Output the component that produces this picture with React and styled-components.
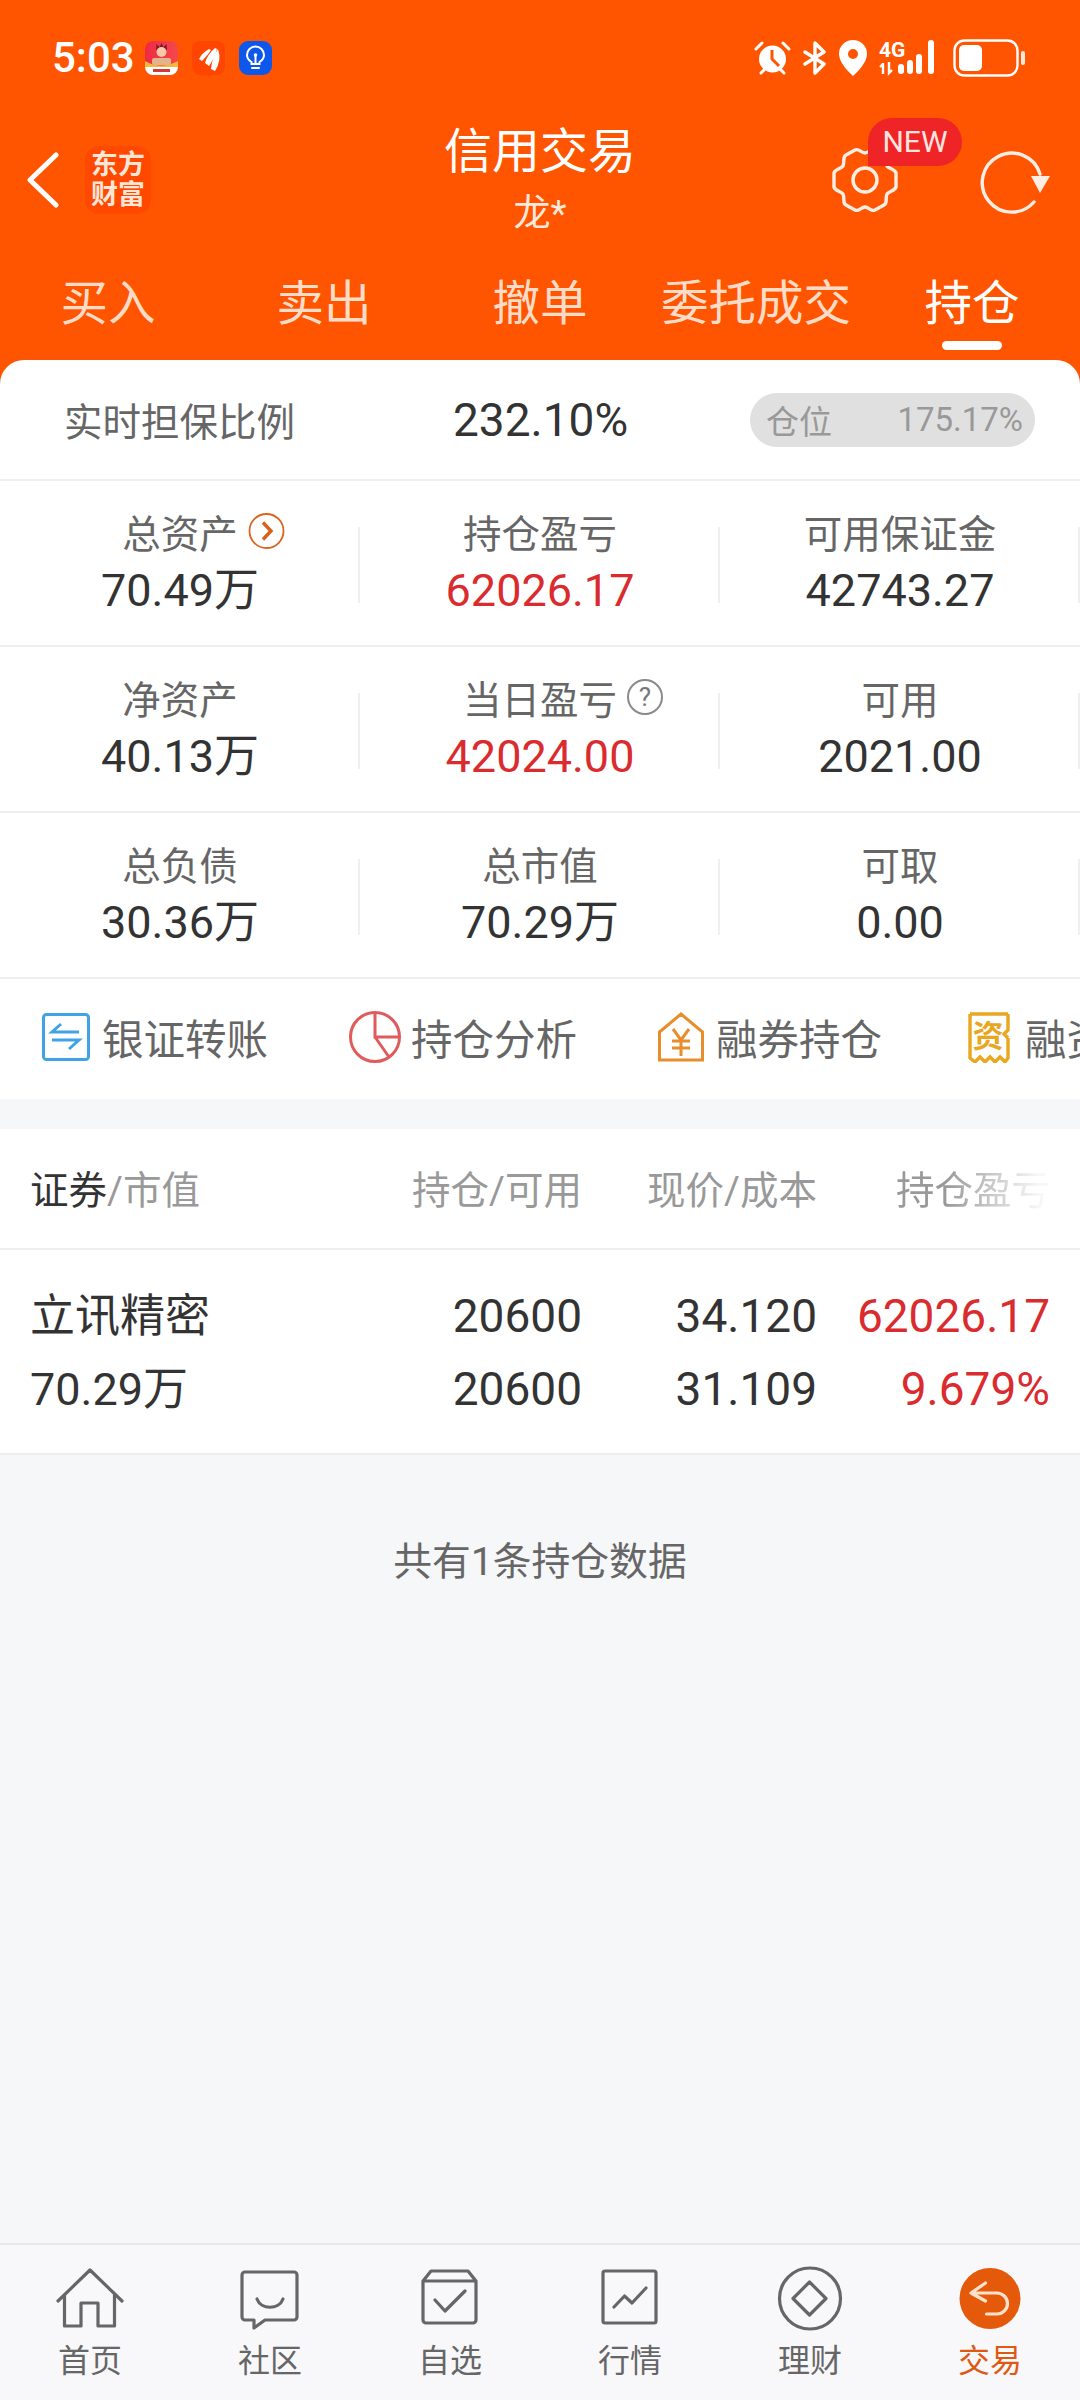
import styled, { createGlobalStyle } from 'styled-components';

const FONT = `Roboto, "Noto Sans CJK SC", "Noto Sans", sans-serif`;
const ORANGE = '#ff5500';
const RED = '#da2b2f';
const INK = '#333';

const GlobalStyle = createGlobalStyle`
  html, body {
    margin: 0;
    padding: 0;
    background: #f6f7f9;
  }
  * {
    box-sizing: border-box;
  }
`;

const Page = styled.div`
  width: 1080px;
  height: 2400px;
  display: flex;
  flex-direction: column;
  font-family: ${FONT};
  background: #f6f7f9;
  overflow: hidden;
`;

const Header = styled.header`
  height: 384px;
  margin-bottom: -24px;
  background: ${ORANGE};
  color: #fff;
  flex-shrink: 0;
`;

const StatusBar = styled.div`
  height: 115px;
  padding: 0 55px 0 52px;
  display: flex;
  align-items: center;
  justify-content: space-between;
`;

const StatusGroup = styled.div`
  display: flex;
  align-items: center;
  gap: ${props => props.$gap || 0}px;
`;

const Time = styled.span`
  width: 79px;
  font-size: 42px;
  font-weight: 500;
  line-height: 46px;
  white-space: nowrap;
`;

const NavRow = styled.div`
  height: 129px;
  display: grid;
  grid-template-columns: 1fr auto 1fr;
  align-items: center;
`;

const NavLeft = styled.div`
  display: flex;
  align-items: center;
  padding-left: 27px;
  gap: 26px;
`;

const BrandLogo = styled.div`
  width: 66px;
  height: 68px;
  border-radius: 14px;
  background: #ff4800;
  color: #ffe6d6;
  font-size: 27px;
  font-weight: 700;
  line-height: 30px;
  text-align: center;
  padding-top: 4px;
  white-space: nowrap;
`;

const NavTitle = styled.div`
  text-align: center;
  margin-top: -2px;
`;

const TitleText = styled.div`
  font-size: 48px;
  line-height: 62px;
  margin-bottom: 8px;
`;

const SubText = styled.div`
  font-size: 37px;
  line-height: 46px;
  color: #ffe9dc;
`;

const NavRight = styled.div`
  display: flex;
  justify-content: flex-end;
  align-items: center;
  padding-right: 29px;
  gap: 80px;
`;

const GearWrap = styled.div`
  position: relative;
  width: 68px;
  height: 68px;
`;

const NewBadge = styled.span`
  position: absolute;
  left: 37px;
  top: -28px;
  width: 94px;
  height: 48px;
  border-radius: 24px 24px 24px 0;
  background: #ee2426;
  color: #ffe4e0;
  font-size: 30px;
  line-height: 47px;
  text-align: center;
`;

const Tabs = styled.nav`
  height: 116px;
  display: grid;
  grid-template-columns: repeat(5, 216px);
  justify-items: center;
`;

const Tab = styled.div`
  position: relative;
  height: 90px;
  margin-top: 16px;
  font-size: 47.5px;
  line-height: 88px;
  color: ${props => (props.$active ? '#fff' : '#ffdcc8')};
  white-space: nowrap;
`;

const TabMark = styled.i`
  position: absolute;
  left: 50%;
  bottom: 0;
  width: 60px;
  height: 9px;
  margin-left: -30px;
  border-radius: 5px;
  background: #fff;
`;

const Card = styled.section`
  background: #fff;
  border-radius: 24px 24px 0 0;
  position: relative;
  flex-shrink: 0;
`;

const RatioRow = styled.div`
  height: 121px;
  padding: 0 44px 0 64px;
  display: flex;
  align-items: center;
  border-bottom: 2px solid #eeeeee;
`;

const RatioLabel = styled.span`
  width: 389px;
  font-size: 38.5px;
  color: #666;
  margin-top: -2px;
`;

const RatioValue = styled.span`
  width: 297px;
  font-size: 46px;
  color: ${INK};
`;

const Pill = styled.div`
  width: 285px;
  height: 54px;
  padding: 0 12px 0 16px;
  border-radius: 27px;
  background: #e0e0e0;
  display: flex;
  align-items: center;
  justify-content: space-between;
  font-size: 33px;
  color: #999;
`;

const MetricRow = styled.div`
  height: 166px;
  display: grid;
  grid-template-columns: repeat(3, 360px);
  align-items: center;
  border-bottom: 2px solid #eeeeee;
`;

const Metric = styled.div`
  position: relative;
  text-align: center;
  &::after {
    content: '';
    position: absolute;
    right: 0;
    top: 22px;
    height: 76px;
    border-right: 2px solid #efefef;
  }
`;

const MetricLabel = styled.div`
  height: 56px;
  padding-bottom: 4px;
  display: flex;
  justify-content: center;
  align-items: center;
  font-size: 38.5px;
  color: #666;
`;

const MetricName = styled.span`
  position: relative;
  white-space: nowrap;
`;

// hint marks hang off the label so the label itself stays centred in its column
const LabelExtra = styled.span`
  position: absolute;
  left: 100%;
  top: 50%;
  margin-left: 10px;
  transform: translateY(-50%);
  display: flex;
`;

const MetricValue = styled.div`
  height: 60px;
  font-size: 45px;
  line-height: 60px;
  color: ${props => (props.$up ? RED : INK)};
`;

const HelpMark = styled.span`
  width: 36px;
  height: 36px;
  border: 2px solid #8a8a8a;
  border-radius: 50%;
  font-size: 26px;
  line-height: 32px;
  text-align: center;
  color: #777;
`;

const Shortcuts = styled.div`
  height: 120px;
  padding: 0 0 4px 42px;
  display: flex;
  align-items: center;
  gap: 81px;
  overflow: hidden;
  background: #fff;
  flex-shrink: 0;
`;

const Shortcut = styled.div`
  display: flex;
  align-items: center;
  gap: ${props => props.$gap || 12}px;
  margin-left: ${props => props.$shift || 0}px;
  font-size: 41.5px;
  color: #666;
  white-space: nowrap;
  flex-shrink: 0;
`;

const Table = styled.section`
  margin-top: 30px;
  background: #fff;
  border-bottom: 2px solid #eeeeee;
  flex-shrink: 0;
`;

const TableRow = styled.div`
  display: grid;
  grid-template-columns: 316px 236px 235px 233px;
  padding: 0 30px;
  align-items: center;
`;

const TableHead = styled(TableRow)`
  height: 121px;
  padding-bottom: 4px;
  font-size: 38.5px;
  color: #999;
  border-bottom: 2px solid #eeeeee;
`;

const HeadCell = styled.div`
  text-align: right;
  white-space: nowrap;
`;

const HeadFirst = styled.div`
  color: #999;
  b {
    font-weight: 400;
    color: ${INK};
  }
`;

const HeadFade = styled(HeadCell)`
  -webkit-mask-image: linear-gradient(90deg, #000 55%, rgba(0, 0, 0, 0.08) 95%);
  mask-image: linear-gradient(90deg, #000 55%, rgba(0, 0, 0, 0.08) 95%);
`;

const BodyRow = styled(TableRow)`
  height: 203px;
  padding-top: 3px;
  grid-auto-rows: 73px;
  align-content: center;
`;

const Cell = styled.div`
  font-size: ${props => (props.$name ? 45 : 46)}px;
  line-height: 73px;
  text-align: ${props => (props.$name ? 'left' : 'right')};
  color: ${props => (props.$up ? RED : INK)};
  white-space: nowrap;
`;

const Summary = styled.div`
  flex: 1;
  padding-top: 82px;
  text-align: center;
  font-size: 38.8px;
  line-height: 50px;
  color: #666;
`;

const Footer = styled.footer`
  height: 157px;
  flex-shrink: 0;
  display: grid;
  grid-template-columns: repeat(6, 180px);
  padding-top: 18px;
  background: #f8f8fb;
  border-top: 2px solid #e8e8ea;
`;

const FootItem = styled.div`
  display: flex;
  flex-direction: column;
  align-items: center;
  font-size: 32px;
  line-height: 44px;
  color: ${props => (props.$active ? '#de5a12' : '#666')};
`;

const FootIcon = styled.svg.attrs({ viewBox: '0 0 72 72', width: 72, height: 72 })`
  display: block;
  margin-bottom: 4px;
  fill: none;
  stroke: #666;
  stroke-width: 3.2;
  stroke-linejoin: round;
  stroke-linecap: round;
`;

const AppIcon = () => (
  <svg width="33" height="34" viewBox="0 0 33 34">
    <defs>
      <linearGradient id="appBg" x1="0" y1="0" x2="1" y2="0">
        <stop offset="0" stopColor="#ee2a44" />
        <stop offset="1" stopColor="#f5484a" />
      </linearGradient>
    </defs>
    <rect width="33" height="34" rx="8" fill="url(#appBg)" />
    <path d="M0 20 Q16 29 33 20 V27 H0z" fill="#f5b83a" />
    <path d="M0 26 H33 A8 8 0 0 1 25 34 H8 A8 8 0 0 1 0 26z" fill="#fff" />
    <path d="M11 9 L11.5 3 L14.5 6 L16.5 2 L18.5 6 L21.5 3 L22 9z" fill="#7c1c2c" />
    <circle cx="16.5" cy="11" r="5" fill="#f8c8a8" />
    <rect x="7" y="17" width="19" height="7" rx="2" fill="#e3b48a" />
    <rect x="8" y="28" width="17" height="3" fill="#d03a3a" />
  </svg>
);

const ReadIcon = () => (
  <svg width="33" height="34" viewBox="0 0 33 34">
    <rect width="33" height="34" rx="8" fill="#ff4500" />
    <path d="M7 18 Q10 12 17 8 L19 9 Q16 14 10 20z" fill="#fff" />
    <path d="M13 22 Q15 14 23 7 L25 8 Q23 16 17 25z" fill="#fff" />
    <path d="M19 28 Q20 16 26 8 Q30 19 23 30z" fill="#fff" />
  </svg>
);

const TipsIcon = () => (
  <svg width="33" height="34" viewBox="0 0 33 34">
    <rect width="33" height="34" rx="9" fill="#0d58ea" />
    <path d="M12.5 23 V21 C10 19.5 8 17 8 14 A8.5 8.5 0 0 1 25 14 C25 17 23 19.5 20.5 21 V23z" fill="none" stroke="#fff" strokeWidth="2" />
    <path d="M13 27 H20 M16.5 23 V15" stroke="#fff" strokeWidth="2" strokeLinecap="round" />
    <circle cx="16.5" cy="14" r="1.8" fill="#fff" />
  </svg>
);

const AlarmIcon = () => (
  <svg width="37" height="36" viewBox="0 0 37 36">
    <circle cx="18.5" cy="19" r="13.5" fill="#fff" />
    <path d="M18 10 V19 L25 26" fill="none" stroke={ORANGE} strokeWidth="3" />
    <path d="M2 9 L8 3 M35 9 L29 3 M7 33 L10 30 M30 33 L27 30" stroke="#fff" strokeWidth="3" strokeLinecap="round" />
  </svg>
);

const BluetoothIcon = () => (
  <svg width="24" height="36" viewBox="0 0 24 36">
    <path d="M2 12 L21 24 L12 33 V3 L21 12 L2 24" fill="none" stroke="#fff" strokeWidth="3.4" strokeLinejoin="round" strokeLinecap="round" />
  </svg>
);

const PinIcon = () => (
  <svg width="28" height="36" viewBox="0 0 28 36">
    <path fillRule="evenodd" d="M14 0 A14 14 0 0 1 28 14 C28 23 18 32 14 36 C10 32 0 23 0 14 A14 14 0 0 1 14 0z M14 9 A5 5 0 1 0 14 19 A5 5 0 0 0 14 9z" fill="#fff" />
  </svg>
);

const SignalIcon = () => (
  <svg width="62" height="36" viewBox="0 0 62 36" overflow="visible">
    <text x="0" y="17" fontSize="21" fontWeight="700" fontFamily="Roboto, sans-serif" fill="#fff">4G</text>
    <path d="M4 24 L1 27 M4 23 V34 M10 22 V33 L13 30" fill="none" stroke="#fff" strokeWidth="2.4" />
    <g fill="#fff">
      <rect x="19" y="24" width="6" height="10" rx="3" />
      <rect x="28" y="20" width="6" height="14" rx="3" />
      <rect x="37" y="14" width="6" height="20" rx="3" />
      <rect x="49" y="0" width="6" height="34" rx="3" />
    </g>
  </svg>
);

const BatteryIcon = () => (
  <svg width="72" height="38" viewBox="0 0 72 38">
    <rect x="1.5" y="1.5" width="63" height="35" rx="10" fill="none" stroke="#fff" strokeWidth="2.4" />
    <rect x="6" y="6" width="23" height="26" rx="5" fill="#fff" />
    <rect x="68" y="12" width="4" height="14" rx="2" fill="#ffe9dc" />
  </svg>
);

const BackIcon = () => (
  <svg width="32" height="56" viewBox="0 0 32 56">
    <path d="M29 3 L3 28 L29 53" fill="none" stroke="#fff" strokeWidth="5" strokeLinecap="round" strokeLinejoin="round" />
  </svg>
);

const GearIcon = () => (
  <svg width="68" height="68" viewBox="0 0 68 68">
    <path
      d="M24 4 C28 2 30 7 34 7 C38 7 40 2 44 4 L53 9 C57 11 54 16 56 20 C58 23 64 23 65 27 L65 41 C64 45 58 45 56 48 C54 52 57 57 53 59 L44 64 C40 66 38 61 34 61 C30 61 28 66 24 64 L15 59 C11 57 14 52 12 48 C10 45 4 45 3 41 L3 27 C4 23 10 23 12 20 C14 16 11 11 15 9z"
      fill="none"
      stroke="#ffeee4"
      strokeWidth="3.4"
      strokeLinejoin="round"
    />
    <circle cx="34" cy="34" r="12" fill="none" stroke="#ffeee4" strokeWidth="3.4" />
  </svg>
);

const RefreshIcon = () => (
  <svg width="72" height="68" viewBox="0 0 72 68">
    <path d="M55 56 A29.5 29.5 0 1 1 61 28" fill="none" stroke="#ffeee4" strokeWidth="3.4" strokeLinecap="round" />
    <path d="M52 30 H71 L61 47z" fill="#ffeee4" />
  </svg>
);

const ArrowBadge = () => (
  <svg width="37" height="37" viewBox="0 0 37 37">
    <circle cx="18.5" cy="18.5" r="17" fill="none" stroke="#d9651f" strokeWidth="1.8" />
    <path d="M15 10 L23 18.5 L15 27" fill="none" stroke="#d9601a" strokeWidth="3.4" />
  </svg>
);

const TransferIcon = () => (
  <svg width="48" height="48" viewBox="0 0 48 48">
    <rect x="1.5" y="1.5" width="45" height="45" rx="3" fill="none" stroke="#3fa3e6" strokeWidth="3" />
    <path d="M19 11 L10 19 H37 M10 27 H37 L27 36" fill="none" stroke="#3fa3e6" strokeWidth="3" />
  </svg>
);

const PieIcon = () => (
  <svg width="52" height="52" viewBox="0 0 52 52">
    <circle cx="26" cy="26" r="24.5" fill="none" stroke="#e05b5c" strokeWidth="3" />
    <path d="M26 2 V26 H50 M26 26 L40 46" fill="none" stroke="#e05b5c" strokeWidth="3" />
  </svg>
);

const HouseIcon = () => (
  <svg width="46" height="50" viewBox="0 0 46 50">
    <path d="M23 2 L44.5 20 V48 H1.5 V20z" fill="none" stroke="#e88d2b" strokeWidth="3" />
    <path d="M15 17 L23 28 L31 17 M14 29 H32 M14 36 H32 M23 28 V44" fill="none" stroke="#e88d2b" strokeWidth="3" />
  </svg>
);

const TicketIcon = () => (
  <svg width="42" height="51" viewBox="0 0 42 51">
    <path d="M2 2 H40 M2 2 V46 L7 50 L12 45 L17 50 L22 45 L27 50 L32 45 L37 50 L40 46 V26 M40 2 V18 L36 22 L40 26" fill="none" stroke="#e9a61f" strokeWidth="3.4" />
    <text x="20" y="35" fontSize="31" fontWeight="700" textAnchor="middle" fontFamily={'"Noto Sans CJK SC", sans-serif'} fill="#e9a61f">资</text>
  </svg>
);

const HomeIcon = () => (
  <FootIcon>
    <path d="M4 38 L36 7 L68 38 M10.5 32 V63 H27 V40 H44 V63 H60.5 V32" />
  </FootIcon>
);

const CommunityIcon = () => (
  <FootIcon>
    <path d="M11 9 H60 A3 3 0 0 1 63 12 V54 A3 3 0 0 1 60 57 H31 L20 65 V57 H11 A3 3 0 0 1 8 54 V12 A3 3 0 0 1 11 9z" />
    <path d="M23 36 C27 47 45 47 49 36" />
  </FootIcon>
);

const WatchIcon = () => (
  <FootIcon>
    <path d="M17 8 H54 L62 18 V57 A3 3 0 0 1 59 60 H12 A3 3 0 0 1 9 57 V18z M9 18 H62 M21 37 L31 48 L51 28" />
  </FootIcon>
);

const MarketIcon = () => (
  <FootIcon>
    <rect x="9" y="8" width="53" height="52" rx="2" />
    <path d="M20 44 L30.5 33 L38 40 L52 25" />
  </FootIcon>
);

const FinanceIcon = () => (
  <FootIcon>
    <circle cx="36" cy="35.5" r="30.5" />
    <path d="M35.5 19 L52 35.5 L35.5 52 L19 35.5z" />
  </FootIcon>
);

const TradeIcon = () => (
  <FootIcon>
    <circle cx="36" cy="35.5" r="30.5" fill="#e55a0a" stroke="none" />
    <path d="M31.5 20 L17 30 L31.5 38 M17 30 H43 A10.5 10.5 0 0 1 43 51 H32.5" stroke="#ffe2cc" />
  </FootIcon>
);

const metrics = [
  [
    { label: '总资产', value: '70.49万', extra: <ArrowBadge /> },
    { label: '持仓盈亏', value: '62026.17', up: true },
    { label: '可用保证金', value: '42743.27' },
  ],
  [
    { label: '净资产', value: '40.13万' },
    { label: '当日盈亏', value: '42024.00', up: true, extra: <HelpMark>?</HelpMark> },
    { label: '可用', value: '2021.00' },
  ],
  [
    { label: '总负债', value: '30.36万' },
    { label: '总市值', value: '70.29万' },
    { label: '可取', value: '0.00' },
  ],
];

const tabs = ['买入', '卖出', '撤单', '委托成交', '持仓'];

const footItems = [
  { label: '首页', Icon: HomeIcon },
  { label: '社区', Icon: CommunityIcon },
  { label: '自选', Icon: WatchIcon },
  { label: '行情', Icon: MarketIcon },
  { label: '理财', Icon: FinanceIcon },
  { label: '交易', Icon: TradeIcon, active: true },
];

export default function App() {
  return (
    <Page>
      <GlobalStyle />
      <Header>
        <StatusBar>
          <StatusGroup $gap={14}>
            <Time>5:03</Time>
            <AppIcon />
            <ReadIcon />
            <TipsIcon />
          </StatusGroup>
          <StatusGroup $gap={12}>
            <AlarmIcon />
            <BluetoothIcon />
            <PinIcon />
            <SignalIcon />
            <BatteryIcon />
          </StatusGroup>
        </StatusBar>
        <NavRow>
          <NavLeft>
            <BackIcon />
            <BrandLogo>东方<br />财富</BrandLogo>
          </NavLeft>
          <NavTitle>
            <TitleText>信用交易</TitleText>
            <SubText>龙*</SubText>
          </NavTitle>
          <NavRight>
            <GearWrap>
              <GearIcon />
              <NewBadge>NEW</NewBadge>
            </GearWrap>
            <RefreshIcon />
          </NavRight>
        </NavRow>
        <Tabs>
          {tabs.map((t, i) => (
            <Tab key={t} $active={i === 4}>
              {t}
              {i === 4 && <TabMark />}
            </Tab>
          ))}
        </Tabs>
      </Header>

      <Card>
        <RatioRow>
          <RatioLabel>实时担保比例</RatioLabel>
          <RatioValue>232.10%</RatioValue>
          <Pill>
            <span>仓位</span>
            <span>175.17%</span>
          </Pill>
        </RatioRow>
        {metrics.map((row, r) => (
          <MetricRow key={r}>
            {row.map(m => (
              <Metric key={m.label}>
                <MetricLabel>
                  <MetricName>
                    {m.label}
                    {m.extra && <LabelExtra>{m.extra}</LabelExtra>}
                  </MetricName>
                </MetricLabel>
                <MetricValue $up={m.up}>{m.value}</MetricValue>
              </Metric>
            ))}
          </MetricRow>
        ))}
      </Card>

      <Shortcuts>
        <Shortcut><TransferIcon />银证转账</Shortcut>
        <Shortcut $gap={10}><PieIcon />持仓分析</Shortcut>
        <Shortcut><HouseIcon />融券持仓</Shortcut>
        <Shortcut $gap={15} $shift={5}><TicketIcon />融资持仓</Shortcut>
      </Shortcuts>

      <Table>
        <TableHead>
          <HeadFirst><b>证券</b>/市值</HeadFirst>
          <HeadCell>持仓/可用</HeadCell>
          <HeadCell>现价/成本</HeadCell>
          <HeadFade>持仓盈亏</HeadFade>
        </TableHead>
        <BodyRow>
          <Cell $name>立讯精密</Cell>
          <Cell>20600</Cell>
          <Cell>34.120</Cell>
          <Cell $up>62026.17</Cell>
          <Cell $name>70.29万</Cell>
          <Cell>20600</Cell>
          <Cell>31.109</Cell>
          <Cell $up>9.679%</Cell>
        </BodyRow>
      </Table>

      <Summary>共有1条持仓数据</Summary>

      <Footer>
        {footItems.map(({ label, Icon, active }) => (
          <FootItem key={label} $active={active}>
            <Icon />
            {label}
          </FootItem>
        ))}
      </Footer>
    </Page>
  );
}
